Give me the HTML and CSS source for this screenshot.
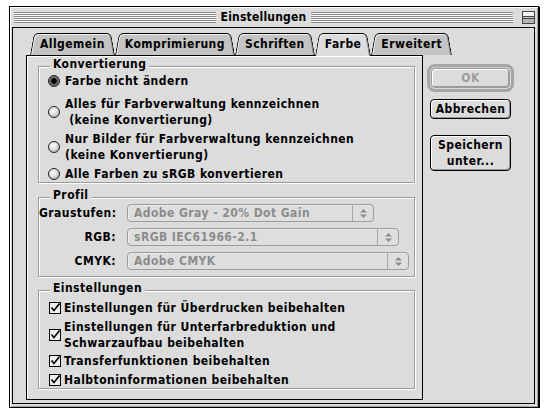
FILE: index.html
```html
<!DOCTYPE html>
<html lang="de">
<head>
    <meta charset="UTF-8">
    <title>Einstellungen</title>
    <link rel="stylesheet" href="styles.css">
</head>
<body>
    <div class="window">
        <div class="titlebar">
            <div class="stripes"></div>
            <div class="title">Einstellungen</div>
            <div class="stripes"></div>
            <div class="collapse-box"></div>
        </div>

        <div class="content">
            <div class="tab-area">
                <div class="tabs">
                    <div class="tab">Allgemein</div>
                    <div class="tab">Komprimierung</div>
                    <div class="tab">Schriften</div>
                    <div class="tab active">Farbe</div>
                    <div class="tab">Erweitert</div>
                </div>

                <div class="panel">
                    <div class="group">
                        <div class="group-title">Konvertierung</div>
                        <div class="options">
                            <div class="option"><span class="radio checked"></span><span>Farbe nicht ändern</span></div>
                            <div class="option"><span class="radio"></span><span>Alles für Farbverwaltung kennzeichnen<br>&nbsp;(keine Konvertierung)</span></div>
                            <div class="option"><span class="radio"></span><span>Nur Bilder für Farbverwaltung kennzeichnen<br>(keine Konvertierung)</span></div>
                            <div class="option"><span class="radio"></span><span>Alle Farben zu sRGB konvertieren</span></div>
                        </div>
                    </div>

                    <div class="group group-profile">
                        <div class="group-title">Profil</div>
                        <div class="profile-rows">
                            <div class="profile-row">
                                <span class="profile-label">Graustufen:</span>
                                <div class="popup popup-gray">
                                    <span class="popup-text">Adobe Gray - 20% Dot Gain</span>
                                    <span class="popup-arrows"><svg width="9" height="11" viewBox="0 0 9 11"><path d="M1 4.5 L4.5 1 L8 4.5 Z M1 6.5 L4.5 10 L8 6.5 Z" fill="#8c8c8c"/></svg></span>
                                </div>
                            </div>
                            <div class="profile-row">
                                <span class="profile-label">RGB:</span>
                                <div class="popup popup-rgb">
                                    <span class="popup-text">sRGB IEC61966-2.1</span>
                                    <span class="popup-arrows"><svg width="9" height="11" viewBox="0 0 9 11"><path d="M1 4.5 L4.5 1 L8 4.5 Z M1 6.5 L4.5 10 L8 6.5 Z" fill="#8c8c8c"/></svg></span>
                                </div>
                            </div>
                            <div class="profile-row">
                                <span class="profile-label">CMYK:</span>
                                <div class="popup popup-cmyk">
                                    <span class="popup-text">Adobe CMYK</span>
                                    <span class="popup-arrows"><svg width="9" height="11" viewBox="0 0 9 11"><path d="M1 4.5 L4.5 1 L8 4.5 Z M1 6.5 L4.5 10 L8 6.5 Z" fill="#8c8c8c"/></svg></span>
                                </div>
                            </div>
                        </div>
                    </div>

                    <div class="group group-settings">
                        <div class="group-title">Einstellungen</div>
                        <div class="checks">
                            <div class="check">
                                <svg class="checkbox" width="12" height="12" viewBox="0 0 12 12"><rect x="0.5" y="0.5" width="11" height="11" fill="#eeeeee" stroke="#000"/><path d="M2.5 5.5 L5 8.5 L10.5 1.5" fill="none" stroke="#000" stroke-width="1.6"/></svg>
                                <span>Einstellungen für Überdrucken beibehalten</span>
                            </div>
                            <div class="check">
                                <svg class="checkbox" width="12" height="12" viewBox="0 0 12 12"><rect x="0.5" y="0.5" width="11" height="11" fill="#eeeeee" stroke="#000"/><path d="M2.5 5.5 L5 8.5 L10.5 1.5" fill="none" stroke="#000" stroke-width="1.6"/></svg>
                                <span>Einstellungen für Unterfarbreduktion und<br>Schwarzaufbau beibehalten</span>
                            </div>
                            <div class="check">
                                <svg class="checkbox" width="12" height="12" viewBox="0 0 12 12"><rect x="0.5" y="0.5" width="11" height="11" fill="#eeeeee" stroke="#000"/><path d="M2.5 5.5 L5 8.5 L10.5 1.5" fill="none" stroke="#000" stroke-width="1.6"/></svg>
                                <span>Transferfunktionen beibehalten</span>
                            </div>
                            <div class="check">
                                <svg class="checkbox" width="12" height="12" viewBox="0 0 12 12"><rect x="0.5" y="0.5" width="11" height="11" fill="#eeeeee" stroke="#000"/><path d="M2.5 5.5 L5 8.5 L10.5 1.5" fill="none" stroke="#000" stroke-width="1.6"/></svg>
                                <span>Halbtoninformationen beibehalten</span>
                            </div>
                        </div>
                    </div>
                </div>
            </div>

            <div class="buttons">
                <div class="default-ring">
                    <button class="btn disabled">OK</button>
                </div>
                <button class="btn btn-cancel">Abbrechen</button>
                <button class="btn btn-save">Speichern<br>unter...</button>
            </div>
        </div>
    </div>
</body>
</html>
```

FILE: styles.css
```css
body {
    margin: 0;
    background: #fff;
    font-family: "DejaVu Sans Condensed", "DejaVu Sans", sans-serif;
    font-stretch: condensed;
    font-size: 12px;
    font-weight: bold;
    letter-spacing: 0.45px;
    color: #000;
}

.window {
    box-sizing: border-box;
    width: 530px;
    height: 402px;
    margin: 6px 0 0 9px;
    padding: 0 3px 3px 2px;
    display: flex;
    flex-direction: column;
    background: #dcdcdc;
    border: 1px solid #000;
    box-shadow: 1px 1px 0 #000, inset 1px 1px 0 #fff, inset -1px -1px 0 #a0a0a0;
}

/* title bar */
.titlebar {
    height: 20px;
    display: flex;
    align-items: center;
    gap: 5px;
    padding-left: 2px;
}

.stripes {
    flex: 1;
    height: 11px;
    background: repeating-linear-gradient(#8a8a8a 0 1px, #fafafa 1px 2px);
}

.title {
    line-height: 14px;
    letter-spacing: 0.2px;
}

.collapse-box {
    box-sizing: border-box;
    width: 13px;
    height: 13px;
    margin-left: 4px;
    border: 1px solid #444;
    background: linear-gradient(#f2f2f2 0 4px, #444 4px 5px, #c4c4c4 5px 6px, #444 6px 7px, #b4b4b4 7px);
}

/* dialog body */
.content {
    flex: 1;
    display: flex;
    border: 1px solid #000;
    padding: 5px 0 3px 13px;
}

.tab-area {
    width: 397px;
    display: flex;
    flex-direction: column;
}

.tabs {
    display: flex;
    align-items: flex-start;
    margin: 0 0 -1px 4px;
    position: relative;
    z-index: 1;
}

.tab {
    position: relative;
    z-index: 0;
    height: 22px;
    line-height: 23px;
    padding: 0 10px;
}

.tab::before,
.tab::after {
    content: '';
    position: absolute;
    top: 0;
    bottom: 0;
    z-index: -1;
    background: #c4c4c4;
    border: 1px solid #000;
    border-bottom: none;
}

.tab::before {
    left: 0;
    right: 40%;
    border-right: none;
    border-top-left-radius: 5px;
    transform: skewX(-10deg);
    transform-origin: bottom left;
    box-shadow: inset 1px 1px 0 #f2f2f2;
}

.tab::after {
    left: 40%;
    right: 0;
    border-left: none;
    border-top-right-radius: 5px;
    transform: skewX(10deg);
    transform-origin: bottom right;
    box-shadow: inset 0 1px 0 #f2f2f2, inset -1px 0 0 #8f8f8f;
}

.tab.active {
    height: 23px;
}

.tab.active::before,
.tab.active::after {
    background: #dcdcdc;
}

.panel {
    flex: 1;
    border: 1px solid #000;
    padding: 10px 7px 0 11px;
    box-shadow: inset 1px 1px 0 #fff;
}

/* group boxes */
.group {
    border: 1px solid #9b9b9b;
    box-shadow: 1px 1px 0 #fff, inset 1px 1px 0 #fff;
}

.group-title {
    display: table;
    margin: -10px 0 0 11px;
    padding: 0 3px;
    line-height: 14px;
    background: #dcdcdc;
}

.group-profile {
    margin-top: 14px;
}

.group-settings {
    margin-top: 13px;
}

.options {
    display: flex;
    flex-direction: column;
    gap: 3px;
    padding: 2px 0 0 9px;
}

.option {
    display: flex;
    align-items: center;
    gap: 5px;
    line-height: 16px;
}

.option:first-child {
    margin-bottom: 4px;
}

.radio {
    box-sizing: border-box;
    flex: none;
    width: 12px;
    height: 12px;
    border-radius: 50%;
    border: 1px solid #222;
    background: radial-gradient(circle at 40% 35%, #fff 0, #e8e8e8 35%, #9a9a9a 100%);
}

.radio.checked {
    background: radial-gradient(circle, #000 0 2.4px, #5a5a5a 3px, #8c8c8c 100%);
}

/* profile popups */
.profile-rows {
    display: flex;
    flex-direction: column;
    gap: 6px;
    padding: 2px 0 6px;
}

.profile-row {
    display: flex;
    align-items: center;
    gap: 11px;
}

.profile-label {
    width: 77px;
    text-align: right;
}

.popup {
    box-sizing: border-box;
    height: 18px;
    display: flex;
    border: 1px solid #9c9c9c;
    border-radius: 4px;
    background: #dedede;
    color: #8c8c8c;
    box-shadow: inset 1px 1px 0 #ececec;
}

.popup-gray { width: 247px; }
.popup-rgb { width: 272px; }
.popup-cmyk { width: 282px; }

.popup-text {
    flex: 1;
    padding-left: 6px;
    line-height: 16px;
}

.popup-arrows {
    width: 20px;
    display: flex;
    align-items: center;
    justify-content: center;
    border-left: 1px solid #a8a8a8;
}

/* checkboxes */
.checks {
    display: flex;
    flex-direction: column;
    gap: 2.5px;
    padding: 5px 0 0 10px;
}

.check {
    display: flex;
    align-items: center;
    gap: 3px;
    line-height: 16px;
}

.checkbox {
    flex: none;
}

/* buttons */
.buttons {
    width: 81px;
    margin-left: 7px;
    padding-top: 31px;
    display: flex;
    flex-direction: column;
}

.default-ring {
    margin: 0 -3px;
    padding: 1px;
    border: 3px solid #a6a6a6;
    border-radius: 8px;
    box-shadow: inset 1px 1px 0 #c8c8c8;
}

.btn {
    box-sizing: border-box;
    width: 100%;
    height: 20px;
    margin: 0;
    padding: 0;
    font: inherit;
    letter-spacing: inherit;
    line-height: 18px;
    color: #000;
    text-align: center;
    background: #dcdcdc;
    border: 1px solid #000;
    border-radius: 4px;
    box-shadow: inset 1px 1px 0 #fff, inset -1px -1px 0 #9a9a9a;
}

.btn.disabled {
    color: #9c9c9c;
    border-color: #9c9c9c;
}

.btn-cancel {
    margin-top: 7px;
}

.btn-save {
    height: 36px;
    margin-top: 16px;
    line-height: 16px;
}
```
